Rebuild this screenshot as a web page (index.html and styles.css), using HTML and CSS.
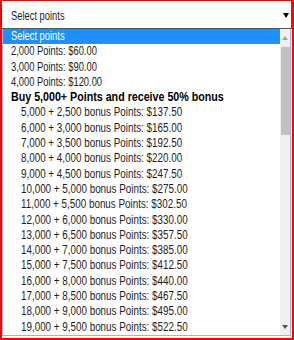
FILE: index.html
```html
<!DOCTYPE html>
<html>
<head>
<meta charset="utf-8">
<link rel="stylesheet" href="styles.css">
</head>
<body>
<div class="frame">
  <div class="select">
    <span class="t">Select points</span>
    <span class="caret"></span>
  </div>
  <div class="list">
    <div class="options">
      <div class="opt selected"><span class="t">Select points</span></div>
      <div class="opt"><span class="t">2,000 Points: $60.00</span></div>
      <div class="opt"><span class="t">3,000 Points: $90.00</span></div>
      <div class="opt"><span class="t">4,000 Points: $120.00</span></div>
      <div class="opt group"><span class="t">Buy 5,000+ Points and receive 50% bonus</span></div>
      <div class="opt sub"><span class="t">5,000 + 2,500 bonus Points: $137.50</span></div>
      <div class="opt sub"><span class="t">6,000 + 3,000 bonus Points: $165.00</span></div>
      <div class="opt sub"><span class="t">7,000 + 3,500 bonus Points: $192.50</span></div>
      <div class="opt sub"><span class="t">8,000 + 4,000 bonus Points: $220.00</span></div>
      <div class="opt sub"><span class="t">9,000 + 4,500 bonus Points: $247.50</span></div>
      <div class="opt sub"><span class="t">10,000 + 5,000 bonus Points: $275.00</span></div>
      <div class="opt sub"><span class="t">11,000 + 5,500 bonus Points: $302.50</span></div>
      <div class="opt sub"><span class="t">12,000 + 6,000 bonus Points: $330.00</span></div>
      <div class="opt sub"><span class="t">13,000 + 6,500 bonus Points: $357.50</span></div>
      <div class="opt sub"><span class="t">14,000 + 7,000 bonus Points: $385.00</span></div>
      <div class="opt sub"><span class="t">15,000 + 7,500 bonus Points: $412.50</span></div>
      <div class="opt sub"><span class="t">16,000 + 8,000 bonus Points: $440.00</span></div>
      <div class="opt sub"><span class="t">17,000 + 8,500 bonus Points: $467.50</span></div>
      <div class="opt sub"><span class="t">18,000 + 9,000 bonus Points: $495.00</span></div>
      <div class="opt sub"><span class="t">19,000 + 9,500 bonus Points: $522.50</span></div>
    </div>
    <div class="scrollbar">
      <div class="btn"><span class="tri-up"></span></div>
      <div class="track"><div class="thumb"></div></div>
      <div class="btn"><span class="tri-down"></span></div>
    </div>
  </div>
</div>
</body>
</html>
```
FILE: styles.css
```css
html, body {
  margin: 0;
  padding: 0;
  background: #fff;
}
.frame {
  width: 294px;
  height: 340px;
  box-sizing: border-box;
  border: 2px solid #ff0000;
  border-top-width: 1px;
  display: flex;
  flex-direction: column;
  font-family: "Liberation Sans", Arial, sans-serif;
  font-size: 12px;
  color: #1e1e1e;
}
.t {
  display: inline-block;
  white-space: nowrap;
  transform: scaleX(0.78);
  transform-origin: 0 50%;
}
.select {
  height: 27px;
  border-bottom: 1px solid #555;
  border-right: 1px solid #3b5a7a;
  display: flex;
  align-items: center;
  justify-content: space-between;
  padding-left: 9px;
  padding-right: 2px;
}
.select .t {
  margin-top: 2px;
}
.caret {
  width: 0;
  height: 0;
  border-left: 3px solid transparent;
  border-right: 3px solid transparent;
  border-top: 5px solid #000;
  margin-top: 1px;
}
.list {
  height: 306px;
  border: 1px solid #9fb4d6;
  border-top: none;
  display: flex;
  margin-right: 1px;
}
.options {
  flex: 1;
  min-width: 0;
  display: flex;
  flex-direction: column;
  overflow: hidden;
}
.opt {
  height: 15.3px;
  line-height: 15.3px;
  padding-left: 8px;
  white-space: nowrap;
}
.opt.selected {
  background: #1e90ff;
  color: #fff;
}
.opt.group {
  font-weight: bold;
  color: #000;
}
.opt.group .t {
  transform: scaleX(0.89);
}
.opt.sub {
  padding-left: 18px;
}
.opt.sub .t {
  transform: scaleX(0.82);
}
.scrollbar {
  width: 10px;
  background: #f0f0f0;
  display: flex;
  flex-direction: column;
}
.btn {
  height: 17px;
  display: flex;
  align-items: center;
  justify-content: center;
}
.tri-up {
  width: 0;
  height: 0;
  border-left: 3px solid transparent;
  border-right: 3px solid transparent;
  border-bottom: 4px solid #a3a3a3;
}
.tri-down {
  width: 0;
  height: 0;
  border-left: 3px solid transparent;
  border-right: 3px solid transparent;
  border-top: 4px solid #505050;
}
.track {
  flex: 1;
}
.thumb {
  margin: 1px 0 0 1px;
  height: 88px;
  background: #c1c1c1;
}
```
